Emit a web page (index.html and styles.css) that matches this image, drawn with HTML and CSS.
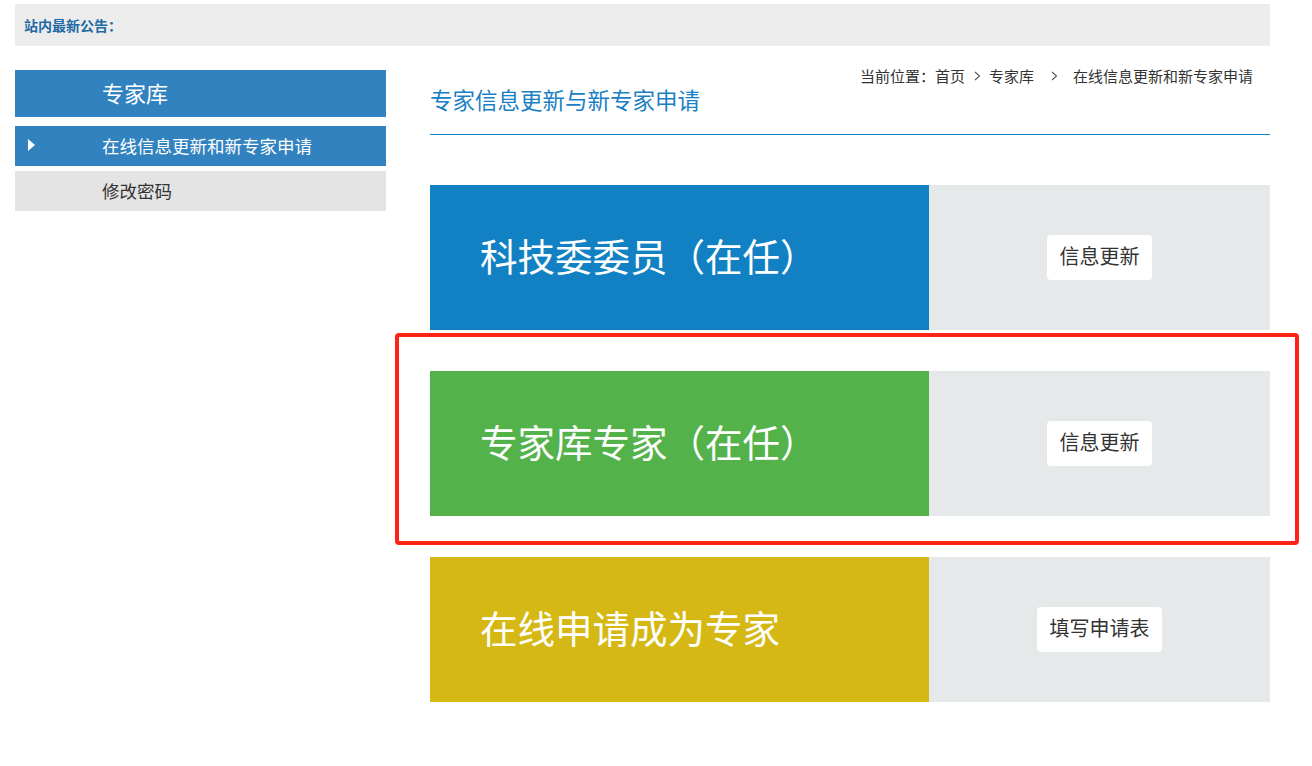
FILE: index.html
```html
<!DOCTYPE html>
<html lang="zh-CN">
<head>
  <meta charset="UTF-8">
  <title>专家库｜在线信息更新和新专家申请</title>
  <meta name="viewport" content="width=device-width, initial-scale=1.0">
  <link rel="stylesheet" href="styles.css">
</head>
<body>

<div class="page">
  <div class="notice">
    <span class="notice-label">站内最新公告：</span>
  </div>

  <div class="layout">
    <div class="sidebar">
      <div class="side-title">专家库</div>
      <a class="side-item active" href="#">在线信息更新和新专家申请</a>
      <a class="side-item" href="#">修改密码</a>
    </div>

    <div class="main">
      <div class="main-head">
        <h2 class="main-title">专家信息更新与新专家申请</h2>
        <div class="crumbs">
          当前位置：<a href="#">首页</a>
          <svg class="sep" width="7" height="10" viewBox="0 0 7 10"><path d="M1 1l4.5 4L1 9" fill="none" stroke="#555" stroke-width="1.1"/></svg>
          <a href="#">专家库</a>
          <svg class="sep wide" width="7" height="10" viewBox="0 0 7 10"><path d="M1 1l4.5 4L1 9" fill="none" stroke="#555" stroke-width="1.1"/></svg>
          <span>在线信息更新和新专家申请</span>
        </div>
      </div>

      <div class="cards">
        <div class="card">
          <div class="card-name blue">科技委委员（在任）</div>
          <div class="card-side"><a class="card-btn" href="#">信息更新</a></div>
        </div>

        <div class="card">
          <div class="card-name green">专家库专家（在任）</div>
          <div class="card-side"><a class="card-btn" href="#">信息更新</a></div>
          <div class="mark"></div>
        </div>

        <div class="card">
          <div class="card-name yellow">在线申请成为专家</div>
          <div class="card-side"><a class="card-btn" href="#">填写申请表</a></div>
        </div>
      </div>
    </div>
  </div>
</div>

</body>
</html>
```

FILE: styles.css
```css
body {
  font-family: "Noto Sans CJK SC", "Noto Sans", sans-serif;
  background-color: #fff;
  color: #333;
  margin: 0;
}
a {
  color: inherit;
  text-decoration: none;
}
.page {
  width: 1255px;
  margin-left: 15px;
  padding-top: 4px;
}
.notice {
  height: 42px;
  background-color: #ececec;
  display: flex;
  align-items: center;
  padding-left: 9px;
}
.notice-label {
  font-size: 14px;
  font-weight: bold;
  color: #1c6aa6;
  line-height: 20px;
}
.layout {
  display: flex;
  gap: 44px;
  margin-top: 24px;
}
.sidebar {
  width: 371px;
  flex: none;
}
.side-title {
  height: 47px;
  background-color: #3282c0;
  color: #fff;
  font-size: 22px;
  line-height: 45px;
  padding-left: 87px;
  margin-bottom: 9px;
}
.side-item {
  display: block;
  position: relative;
  height: 40px;
  line-height: 40px;
  padding-left: 87px;
  font-size: 17.5px;
  background-color: #e4e4e4;
  color: #333;
  margin-bottom: 5px;
}
.side-item.active {
  background-color: #3282c0;
  color: #fff;
}
.side-item.active::before {
  content: "";
  position: absolute;
  left: 13px;
  top: 13px;
  border-left: 7px solid #fff;
  border-top: 6px solid transparent;
  border-bottom: 6px solid transparent;
}
.main {
  flex: 1;
}
.main-head {
  display: flex;
  justify-content: space-between;
  align-items: flex-start;
  height: 64px;
  border-bottom: 1px solid #1282c8;
}
.main-title {
  margin: 14px 0 0;
  font-size: 22.5px;
  font-weight: normal;
  line-height: 30px;
  color: #1a80c4;
}
.crumbs {
  font-size: 15px;
  line-height: 12px;
  color: #333;
  padding-right: 17px;
  display: flex;
  align-items: center;
  white-space: nowrap;
}
.sep {
  margin: 0 8px 0 9px;
}
.sep.wide {
  margin: 0 15px 0 17px;
}
.cards {
  display: flex;
  flex-direction: column;
  gap: 41px;
  margin-top: 50px;
}
.card {
  position: relative;
  display: flex;
  height: 145px;
}
.card-name {
  width: 499px;
  flex: none;
  box-sizing: border-box;
  padding: 0 0 7px 50px;
  display: flex;
  align-items: center;
  font-size: 37.5px;
  color: #fff;
}
.blue {
  background-color: #1181c3;
}
.green {
  background-color: #54b24b;
}
.yellow {
  background-color: #d5b814;
}
.card-side {
  flex: 1;
  background-color: #e6e9ea;
  display: flex;
  align-items: center;
  justify-content: center;
}
.card-btn {
  background-color: #fff;
  border-radius: 4px;
  height: 45px;
  line-height: 42px;
  padding: 0 12.5px;
  font-size: 20px;
  color: #333;
}
/* red outline around the highlighted row */
.mark {
  position: absolute;
  left: -35px;
  top: -38px;
  right: -29px;
  bottom: -29px;
  border: 4px solid #ff2317;
  border-radius: 4px;
  pointer-events: none;
}
```
